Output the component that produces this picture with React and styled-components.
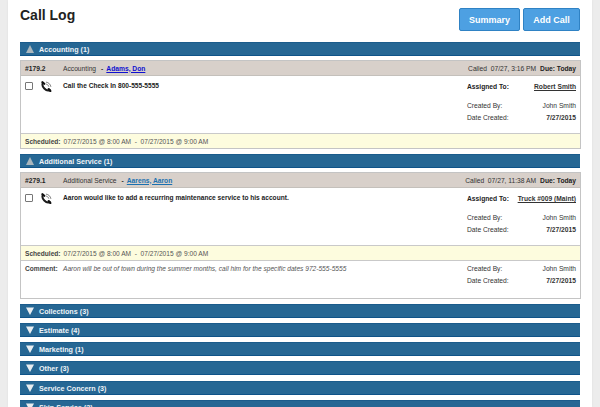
import React from "react";
import styled, { createGlobalStyle } from "styled-components";

const Global = createGlobalStyle`
  html, body { margin: 0; padding: 0; background: #ececec; overflow: hidden; }
  body { font-family: "Liberation Sans", Arial, sans-serif; color: #222; }
`;
const Page = styled.div`
  width: 584px; height: 407px; margin: 0 8px; background: #fff; padding: 0 12px; box-sizing: border-box; overflow: hidden;
  box-shadow: 0 0 2px #ddd;
`;
const Top = styled.header`
  display: flex; justify-content: space-between; height: 42px; box-sizing: border-box; padding-top: 8px;
`;
const Title = styled.h1`
  margin: 0; font-size: 14px; line-height: 15px; font-weight: 700; color: #222;
`;
const Actions = styled.div`display: flex; gap: 3px; height: 23px;`;
const Button = styled.button`
  width: ${p => p.$w}px; height: 23px; padding: 0; background: #4da0e2; color: #fff; border: 1px solid #2f82c4; border-radius: 2px;
  font: 700 9px "Liberation Sans", Arial, sans-serif;
`;
const Bar = styled.div`
  display: flex; align-items: center; gap: 5px; height: 14px; margin-bottom: ${p => p.$mb ?? 5}px; width: 560px; box-sizing: border-box;
  padding-left: 6px; background: #266794; border-top: 1px solid #1b5c8c; border-bottom: 1px solid #0f5388;
  color: #eef3f7; font-size: 7.2px; font-weight: 700;
`;
const Tri = styled.svg`width: 8px; height: 8px; flex: none; margin-top: -1px;`;
const Card = styled.article`
  width: 561px; box-sizing: border-box; border: 1px solid #c4c4c4; margin-bottom: 5px; background: #fff;
`;
const Head = styled.div`
  display: flex; align-items: center; height: 15px; padding: 0 4px; background: #d8d0ca; border-bottom: 1px solid #c4c0bb; box-sizing: border-box; font-size: 6.7px; color: #333;
`;
const Num = styled.b`width: 38px; color: #222;`;
const Called = styled.span`margin-left: auto; color: #333;`;
const Due = styled.b`margin-left: 4px; color: #222;`;
const Link = styled.a`margin-left: 3px; color: ${p => p.$c}; font-weight: 700; text-decoration: underline;`;
const Sep = styled.span`margin-left: 5px; font-weight: 700;`;
const Body = styled.div`
  display: flex; height: ${p => p.$h}px; padding: 5px 4px 0; box-sizing: border-box; border-bottom: 1px solid #c9c9c9;
`;
const Check = styled.span`
  width: 8px; height: 8px; box-sizing: border-box; border: 1px solid #777; background: #fff; border-radius: 1px; flex: none; margin: 1px 8px 0 0;
`;
const Phone = styled.svg`width: 11px; height: 11px; margin: 0 10px 0 0; flex: none;`;
const Msg = styled.div`flex: 1; font-size: 6.6px; font-weight: 700; line-height: 9px; color: #222; padding: 0 0 0 1px;`;
const Info = styled.dl`
  width: 109px; margin: 0 0 0 auto; display: grid; grid-template-columns: 1fr auto; font-size: 6.7px; color: #333; align-content: start;
`;
const Key = styled.dt`margin: 0; line-height: 12px; font-weight: ${p => p.$b ? 700 : 400}; color: ${p => p.$b ? "#222" : "#333"}; margin-bottom: ${p => p.$gap || 0}px;`;
const Val = styled.dd`
  margin: 0; line-height: 12px; text-align: right; font-weight: ${p => p.$b ? 700 : 400}; text-decoration: ${p => p.$u ? "underline" : "none"}; margin-bottom: ${p => p.$gap || 0}px;
`;
const Sched = styled.div`
  display: flex; align-items: center; height: ${p => p.$h}px; padding: 0 4px; background: #fdfcde; font-size: 6.6px; color: #555; box-sizing: border-box;
  border-bottom: ${p => p.$line ? "1px solid #c9c9c9" : "0"};
`;
const SchedLabel = styled.b`margin-right: 3px; color: #444;`;
const Comment = styled.div`display: flex; height: 37px; padding: 2px 4px 0; box-sizing: border-box; font-size: 6.6px;`;
const CommentLabel = styled.b`color: #444; width: 38px; flex: none; line-height: 12px;`;
const CommentText = styled.i`flex: 1; color: #555; line-height: 12px;`;

const Down = () => <Tri viewBox="0 0 8 8"><path d="M0 0.5h8L4 8z" fill="#e8edf0"/></Tri>;
const Up = () => <Tri viewBox="0 0 8 8"><path d="M0 8h8L4 0z" fill="#a9b6bd"/></Tri>;
const PhoneIcon = () => (
  <Phone viewBox="0 0 12 12">
    <path d="M2.2 2C1 4 2 6.6 3.6 8.2c1.6 1.6 4 2.6 6 1.6" fill="none" stroke="#1c1c1c" strokeWidth="2.2" strokeLinecap="round"/>
    <path d="M1.6 1.4l2 1.6M8.4 8.8l1.8 2" stroke="#111" strokeWidth="2.4" strokeLinecap="round"/>
    <path d="M5.4 1.2c2.8.3 5 2.4 5.4 5.2M5.6 3.4c1.4.2 2.6 1.3 2.9 2.8" fill="none" stroke="#555" strokeWidth=".8"/>
  </Phone>
);

const Assigned = ({ who }) => (<>
  <Key $b $gap={7}>Assigned To:</Key><Val $b $u $gap={7}>{who}</Val>
</>);
const Created = () => (<>
  <Key>Created By:</Key><Val>John Smith</Val>
  <Key>Date Created:</Key><Val $b>7/27/2015</Val>
</>);

const closed = [
  { label: "Collections (3)" },
  { label: "Estimate (4)" },
  { label: "Marketing (1)" },
  { label: "Other (3)", mb: 6 },
  { label: "Service Concern (3)" },
  { label: "Skip Service (3)" },
];

export default function App() {
  return (
    <Page>
      <Global />
      <Top>
        <Title>Call Log</Title>
        <Actions>
          <Button $w={61}>Summary</Button>
          <Button $w={57}>Add Call</Button>
        </Actions>
      </Top>
      <Bar $mb={4}><Up />Accounting (1)</Bar>
      <Card>
        <Head>
          <Num>#179.2</Num>Accounting<Sep>-</Sep><Link $c="#1010d0">Adams, Don</Link>
          <Called>Called&nbsp; 07/27, 3:16 PM</Called><Due>Due: Today</Due>
        </Head>
        <Body $h={58}>
          <Check /><PhoneIcon /><Msg>Call the Check In 800-555-5555</Msg>
          <Info><Assigned who="Robert Smith" /><Created /></Info>
        </Body>
        <Sched $h={14}><SchedLabel>Scheduled:</SchedLabel>07/27/2015 @ 8:00 AM &nbsp;-&nbsp; 07/27/2015 @ 9:00 AM</Sched>
      </Card>
      <Bar $mb={4}><Up />Additional Service (1)</Bar>
      <Card>
        <Head>
          <Num>#279.1</Num>Additional Service<Sep>-</Sep><Link $c="#1a70b0">Aarens, Aaron</Link>
          <Called>Called&nbsp; 07/27, 11:38 AM</Called><Due>Due: Today</Due>
        </Head>
        <Body $h={58}>
          <Check /><PhoneIcon /><Msg>Aaron would like to add a recurring maintenance service to his account.</Msg>
          <Info><Assigned who="Truck #009 (Maint)" /><Created /></Info>
        </Body>
        <Sched $h={15} $line><SchedLabel>Scheduled:</SchedLabel>07/27/2015 @ 8:00 AM &nbsp;-&nbsp; 07/27/2015 @ 9:00 AM</Sched>
        <Comment>
          <CommentLabel>Comment:</CommentLabel>
          <CommentText>Aaron will be out of town during the summer months, call him for the specific dates 972-555-5555</CommentText>
          <Info><Created /></Info>
        </Comment>
      </Card>
      {closed.map(c => <Bar key={c.label} $mb={c.mb}><Down />{c.label}</Bar>)}
    </Page>
  );
}
